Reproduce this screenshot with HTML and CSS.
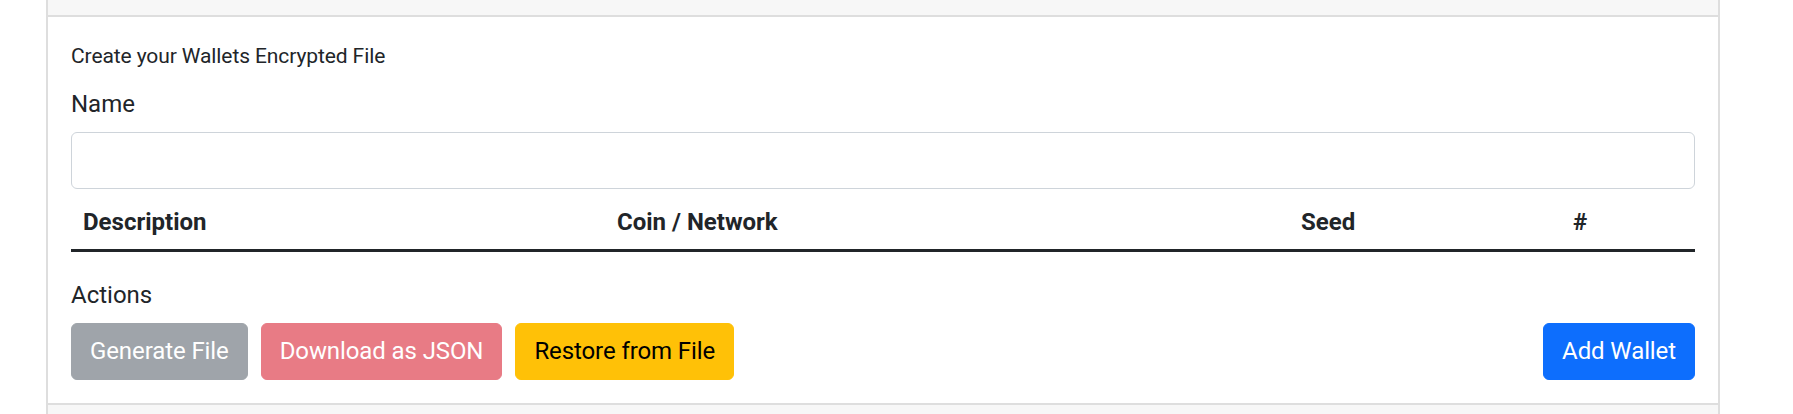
FILE: index.html
```html
<!DOCTYPE html>
<html lang="en">
<head>
<meta charset="utf-8">
<title>Wallets</title>
<link rel="stylesheet" href="styles.css">
</head>
<body>
<div class="page">
  <div class="card">
    <div class="card-header"></div>
    <div class="card-body">
      <div class="intro">Create your Wallets Encrypted File</div>
      <label class="form-label name-label" for="name">Name</label>
      <input class="form-control" id="name" type="text">
      <table class="table">
        <colgroup>
          <col class="c-desc"><col class="c-coin"><col class="c-seed"><col class="c-num">
        </colgroup>
        <thead>
          <tr><th>Description</th><th>Coin / Network</th><th>Seed</th><th>#</th></tr>
        </thead>
        <tbody></tbody>
      </table>
      <div class="form-label actions-label">Actions</div>
      <div class="actions">
        <div class="action-group">
          <button class="btn btn-secondary" disabled>Generate File</button>
          <button class="btn btn-danger" disabled>Download as JSON</button>
          <button class="btn btn-warning">Restore from File</button>
        </div>
        <button class="btn btn-primary">Add Wallet</button>
      </div>
    </div>
    <div class="card-footer"></div>
  </div>
</div>
</body>
</html>
```

FILE: styles.css
```css
* { box-sizing: border-box; }
html, body { margin: 0; padding: 0; background: #fff; }
body {
  font-family: "Segoe UI", Roboto, "Noto Sans", sans-serif;
  font-size: 24px;
  line-height: 1.5;
  color: #212529;
  overflow: hidden;
}
.page { padding-left: 46px; }
.card {
  width: 1674px;
  border-left: 2px solid #dedede;
  border-right: 2px solid #dedede;
  background: #fff;
}
.card-header {
  height: 17px;
  background: #f7f7f7;
  border-bottom: 2px solid #dedede;
}
.card-body {
  padding: 24px 23px 23px 23px;
  display: flex;
  flex-direction: column;
}
.intro {
  font-size: 21px;
  line-height: 31.5px;
  letter-spacing: -0.1px;
  margin-bottom: 13px;
}
.form-label {
  display: block;
  line-height: 36px;
  margin-bottom: 12px;
}
.name-label { margin-bottom: 10px; }
.actions-label { margin-top: 2px; margin-bottom: 10px; }
.form-control {
  display: block;
  width: 100%;
  height: 57px;
  border: 1px solid #ced4da;
  border-radius: 6px;
  background: #fff;
  font: inherit;
  padding: 9px 18px;
  margin: 0;
}
.table {
  width: 100%;
  table-layout: fixed;
  border-collapse: collapse;
  margin-bottom: 23px;
}
.c-desc { width: 534px; }
.c-coin { width: 684px; }
.c-seed { width: 272px; }
.c-num { width: 134px; }
.table th {
  text-align: left;
  font-weight: 700;
  padding: 15px 12px 9px 12px;
  line-height: 36px;
  border-bottom: 3px solid #212529;
}
.actions {
  display: flex;
  justify-content: space-between;
  align-items: center;
}
.action-group {
  display: flex;
  gap: 13px;
}
.btn {
  font: inherit;
  letter-spacing: -0.1px;
  line-height: 36px;
  padding: 9.5px 18px;
  border: 1px solid transparent;
  border-radius: 6px;
  cursor: pointer;
}
.btn:disabled { opacity: 0.65; }
.btn-secondary { background: #6c757d; border-color: #6c757d; color: #fff; }
.btn-danger { background: #dc3545; border-color: #dc3545; color: #fff; }
.btn-warning { background: #ffc107; border-color: #ffc107; color: #000; }
.btn-primary { background: #0d6efd; border-color: #0d6efd; color: #fff; }
.card-footer {
  height: 40px;
  background: #f7f7f7;
  border-top: 2px solid #dedede;
}
```
